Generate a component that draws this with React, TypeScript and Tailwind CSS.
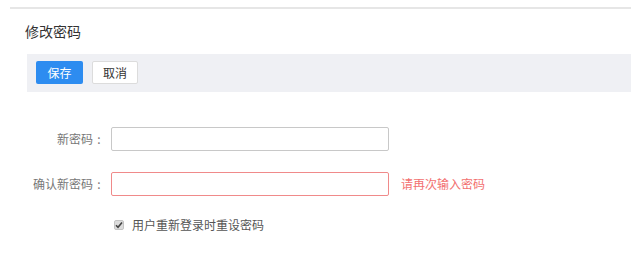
import React from "react";

export default function App() {
  const font = { fontFamily: '"Noto Sans CJK SC", "Noto Sans", sans-serif' };
  return (
    <div className="w-[631px] h-[276px] bg-white overflow-hidden" style={font}>
      <div className="mt-[7px] ml-[10px] h-[2px] bg-[#e6e6e6]" />
      <div className="mt-[12px] pl-[25px] text-[14px] leading-[20px] text-[#333]">修改密码</div>
      <div className="mt-[13px] ml-[27px] h-[38px] bg-[#eff0f4] flex items-start pt-[7px] pl-[9px] gap-[9px]">
        <button className="w-[47px] h-[23px] rounded-[2px] bg-[#2d8cf0] text-white text-[12px] leading-[23px]">保存</button>
        <button className="w-[46px] h-[23px] rounded-[2px] bg-white border border-[#dcdcdc] text-[#333] text-[12px] leading-[21px]">取消</button>
      </div>
      <div className="mt-[35px] flex items-center">
        <div className="w-[93px] text-right text-[12px] text-[#777]">新密码</div>
        <div className="w-[12px] text-center text-[12px] text-[#777]">:</div>
        <input className="ml-[6px] w-[278px] h-[24px] border border-[#c8c8c8] rounded-[2px] outline-none" />
      </div>
      <div className="mt-[21px] flex items-center">
        <div className="w-[93px] text-right text-[12px] text-[#777]">确认新密码</div>
        <div className="w-[12px] text-center text-[12px] text-[#777]">:</div>
        <input className="ml-[6px] w-[278px] h-[24px] border border-[#f08a8a] rounded-[2px] outline-none" />
        <span className="ml-[12px] text-[12px] text-[#f27070]">请再次输入密码</span>
      </div>
      <div className="mt-[20px] flex items-center pl-[114px]">
        <span className="w-[10px] h-[10px] bg-[#dcdcdc] border border-[#c4c4c4] rounded-[2px] flex items-center justify-center">
          <svg width="8" height="8" viewBox="0 0 8 8">
            <path d="M1 4.2 L3 6.2 L7 1.5" stroke="#444" strokeWidth="1.6" fill="none" />
          </svg>
        </span>
        <span className="ml-[8px] text-[12px] text-[#555]">用户重新登录时重设密码</span>
      </div>
    </div>
  );
}
